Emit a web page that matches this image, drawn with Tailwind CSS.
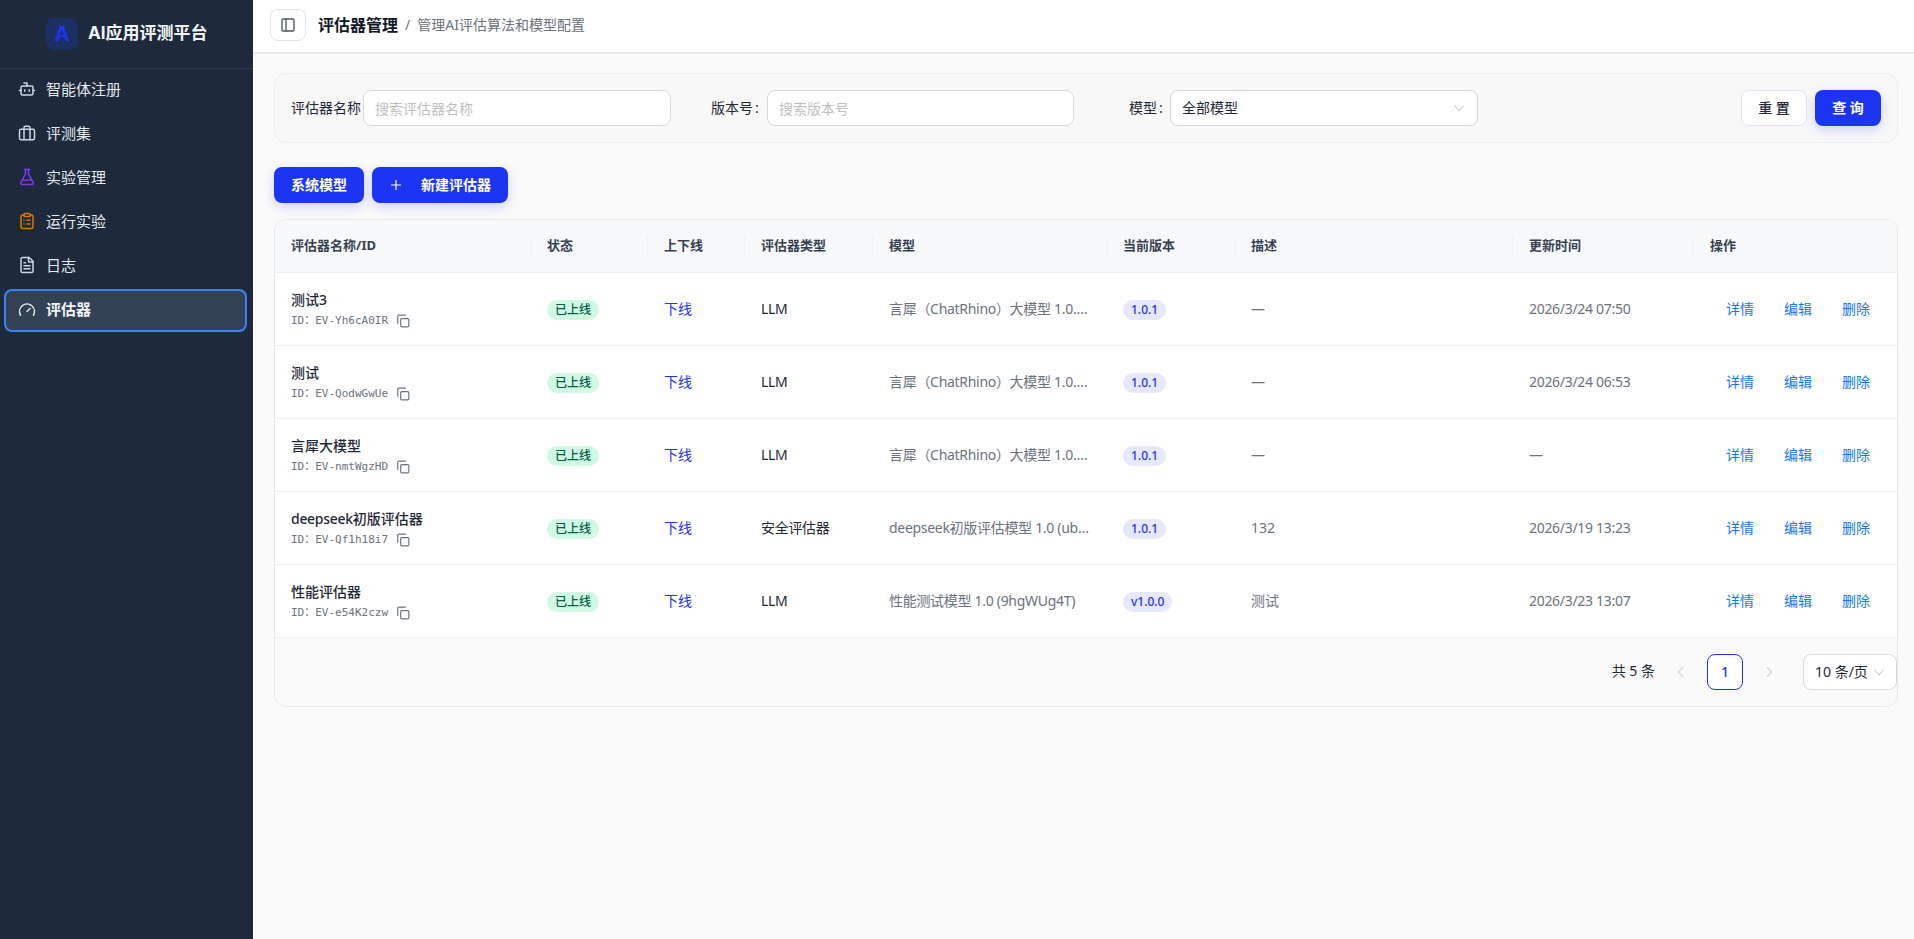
<!DOCTYPE html>
<html lang="zh-CN">

<head>
    <meta charset="UTF-8" />
    <title>评估器管理</title>
    <script src="https://cdn.jsdelivr.net/npm/@tailwindcss/browser@4"></script>
</head>

<body class="h-[939px] overflow-hidden bg-[#fafafa] text-[#1f2937] font-['Noto_Sans','Noto_Sans_CJK_SC',sans-serif]">
    <div class="flex h-full">
        <!-- 侧边栏 -->
        <aside class="w-[253px] shrink-0 bg-[#1e293b] text-[#e2e8f0]">
            <div class="h-[69px] flex items-center pl-[46px] gap-[10px] border-b border-[#2f3b4e]">
                <div class="w-8 h-8 rounded-lg bg-[#1c2f63] flex items-center justify-center text-[#1c35f2] text-xl font-bold font-['Inter',sans-serif]">A</div>
                <span class="text-[17px] font-bold text-[#f1f5f9] whitespace-nowrap font-['Inter','Noto_Sans_CJK_SC',sans-serif]">AI应用评测平台</span>
            </div>
            <nav class="flex flex-col gap-[2px] pl-1 pr-[6px] text-[15px]">
                <a class="h-[42px] flex items-center gap-[10px] pl-[12px] pb-[2px] border-2 border-transparent">
                    <svg class="w-[18px] h-[18px] text-[#cbd5e1]" viewBox="0 0 24 24" fill="none" stroke="currentColor" stroke-width="2" stroke-linecap="round" stroke-linejoin="round"><path d="M12 8V4H8" /><rect x="4" y="8" width="16" height="12" rx="2" /><path d="M2 14h2M20 14h2M15 13v2M9 13v2" /></svg>
                    智能体注册
                </a>
                <a class="h-[42px] flex items-center gap-[10px] pl-[12px] pb-[2px] border-2 border-transparent">
                    <svg class="w-[18px] h-[18px] text-[#cbd5e1]" viewBox="0 0 24 24" fill="none" stroke="currentColor" stroke-width="2" stroke-linecap="round" stroke-linejoin="round"><rect x="2" y="7" width="20" height="14" rx="2" /><path d="M16 7V5a2 2 0 0 0-2-2h-4a2 2 0 0 0-2 2v2M8 7v14M16 7v14" /></svg>
                    评测集
                </a>
                <a class="h-[42px] flex items-center gap-[10px] pl-[12px] pb-[2px] border-2 border-transparent">
                    <svg class="w-[18px] h-[18px] text-[#7c3aed]" viewBox="0 0 24 24" fill="none" stroke="currentColor" stroke-width="2" stroke-linecap="round" stroke-linejoin="round"><path d="M14 2v6l6.200 11.200A1.800 1.800 0 0 1 18.600 22H5.400a1.800 1.800 0 0 1-1.600-2.800L10 8V2" /><path d="M8.500 2h7M6.500 16h11" /></svg>
                    实验管理
                </a>
                <a class="h-[42px] flex items-center gap-[10px] pl-[12px] pb-[2px] border-2 border-transparent">
                    <svg class="w-[18px] h-[18px] text-[#d97706]" viewBox="0 0 24 24" fill="none" stroke="currentColor" stroke-width="2" stroke-linecap="round" stroke-linejoin="round"><rect x="8" y="2" width="8" height="4" rx="1" /><path d="M16 4h2a2 2 0 0 1 2 2v14a2 2 0 0 1-2 2H6a2 2 0 0 1-2-2V6a2 2 0 0 1 2-2h2" /><path d="M12 11h4M12 16h4M8 11h.01M8 16h.01" /></svg>
                    运行实验
                </a>
                <a class="h-[42px] flex items-center gap-[10px] pl-[12px] pb-[2px] border-2 border-transparent">
                    <svg class="w-[18px] h-[18px] text-[#cbd5e1]" viewBox="0 0 24 24" fill="none" stroke="currentColor" stroke-width="2" stroke-linecap="round" stroke-linejoin="round"><path d="M15 2H6a2 2 0 0 0-2 2v16a2 2 0 0 0 2 2h12a2 2 0 0 0 2-2V7z" /><path d="M14 2v5a1 1 0 0 0 1 1h5M10 9H8M16 13H8M16 17H8" /></svg>
                    日志
                </a>
                <a class="h-[43px] flex items-center gap-[10px] pl-[12px] pb-[2px] border-2 border-[#3b82f6] rounded-lg bg-[#334155] font-bold text-[#f1f5f9]">
                    <svg class="w-[18px] h-[18px] text-[#e2e8f0]" viewBox="0 0 24 24" fill="none" stroke="currentColor" stroke-width="2" stroke-linecap="round" stroke-linejoin="round"><path d="m12 14 4-4" /><path d="M3.340 19a10 10 0 1 1 17.320 0" /></svg>
                    评估器
                </a>
            </nav>
        </aside>

        <div class="flex-1 min-w-0 flex flex-col">
            <!-- 顶栏 -->
            <header class="h-[54px] shrink-0 bg-white border-b-2 border-[#e7e7ea] flex items-center pl-[17px] pb-[2px]">
                <button class="w-[36px] h-[32px] rounded-lg border border-[#dde2f5] bg-white flex items-center justify-center">
                    <svg class="w-4 h-4 text-[#4b5563]" viewBox="0 0 24 24" fill="none" stroke="currentColor" stroke-width="2" stroke-linecap="round" stroke-linejoin="round"><rect x="3" y="3" width="18" height="18" rx="2" /><path d="M9 3v18" /></svg>
                </button>
                <h1 class="ml-3 text-base font-bold text-[#111827]">评估器管理</h1>
                <span class="mx-[7px] text-sm text-[#6b7280]">/</span>
                <span class="text-sm text-[#6b7280]">管理AI评估算法和模型配置</span>
            </header>

            <main class="pl-[21px] pr-4 pt-[19px]">
                <!-- 筛选 -->
                <div class="h-[70px] rounded-xl border border-[#eceef1] bg-[#f8f8f9] flex items-center pl-4 pr-4 text-sm">
                    <label class="w-[72px] text-[#1f2937] whitespace-nowrap">评估器名称</label>
                    <input class="w-[308px] h-[36px] rounded-lg border border-[#d9d9d9] bg-white px-[11px] outline-none placeholder:text-[#bfbfbf]" placeholder="搜索评估器名称" />
                    <label class="ml-[40px] w-[56px] text-[#1f2937] whitespace-nowrap">版本号<span class="ml-[2px]">:</span></label>
                    <input class="w-[307px] h-[36px] rounded-lg border border-[#d9d9d9] bg-white px-[11px] outline-none placeholder:text-[#bfbfbf]" placeholder="搜索版本号" />
                    <label class="ml-[55px] w-[41px] text-[#1f2937] whitespace-nowrap">模型<span class="ml-[2px]">:</span></label>
                    <div class="w-[308px] h-[36px] rounded-lg border border-[#d9d9d9] bg-white pl-[11px] pr-[12px] flex items-center justify-between">
                        全部模型
                        <svg class="w-3 h-3 text-[#bfbfbf]" viewBox="0 0 12 12" fill="none" stroke="currentColor" stroke-width="1"><path d="M1.500 3.500 6 9l4.500-5.500" /></svg>
                    </div>
                    <button class="ml-auto w-[66px] h-[36px] rounded-lg border border-[#dde2f5] bg-white font-medium text-[#1f2937]">重 置</button>
                    <button class="ml-2 w-[66px] h-[36px] rounded-lg bg-[#1c35f2] text-white font-semibold shadow-[0_4px_12px_rgba(28,53,242,0.2)]">查 询</button>
                </div>

                <div class="mt-6 flex gap-2 text-sm font-semibold text-white">
                    <button class="w-[90px] h-[36px] rounded-lg bg-[#1c35f2] shadow-[0_4px_12px_rgba(28,53,242,0.2)]">系统模型</button>
                    <button class="w-[136px] h-[36px] rounded-lg bg-[#1c35f2] flex items-center pl-[17px] gap-[18px] shadow-[0_4px_12px_rgba(28,53,242,0.2)]">
                        <svg class="w-[14px] h-[14px]" viewBox="0 0 14 14" fill="none" stroke="currentColor" stroke-width="1.200"><path d="M7 2v10M2 7h10" /></svg>
                        新建评估器
                    </button>
                </div>

                <!-- 表格 -->
                <div class="mt-4 h-[488px] rounded-xl border border-[#e5e7eb] bg-[#fafafa] overflow-hidden">
                    <table class="w-full table-fixed border-collapse text-sm">
                        <colgroup>
                            <col class="w-[256px]" />
                            <col class="w-[117px]" />
                            <col class="w-[97px]" />
                            <col class="w-[128px]" />
                            <col class="w-[234px]" />
                            <col class="w-[128px]" />
                            <col class="w-[278px]" />
                            <col class="w-[181px]" />
                            <col />
                        </colgroup>
                        <thead>
                            <tr class="h-[52px] bg-[#f8f9fb] border-b border-[#eef0f3] text-[13px] font-bold text-[#374151]">
                                <th class="text-left font-bold px-4"><div class="relative">评估器名称/ID<i class="absolute right-[-16px] top-0 h-[22px] w-px bg-[#eef0f3]"></i></div></th>
                                <th class="text-left font-bold px-4"><div class="relative">状态<i class="absolute right-[-16px] top-0 h-[22px] w-px bg-[#eef0f3]"></i></div></th>
                                <th class="text-left font-bold px-4"><div class="relative">上下线<i class="absolute right-[-16px] top-0 h-[22px] w-px bg-[#eef0f3]"></i></div></th>
                                <th class="text-left font-bold px-4"><div class="relative">评估器类型<i class="absolute right-[-16px] top-0 h-[22px] w-px bg-[#eef0f3]"></i></div></th>
                                <th class="text-left font-bold px-4"><div class="relative">模型<i class="absolute right-[-16px] top-0 h-[22px] w-px bg-[#eef0f3]"></i></div></th>
                                <th class="text-left font-bold px-4"><div class="relative">当前版本<i class="absolute right-[-16px] top-0 h-[22px] w-px bg-[#eef0f3]"></i></div></th>
                                <th class="text-left font-bold px-4"><div class="relative">描述<i class="absolute right-[-16px] top-0 h-[22px] w-px bg-[#eef0f3]"></i></div></th>
                                <th class="text-left font-bold px-4"><div class="relative">更新时间<i class="absolute right-[-16px] top-0 h-[22px] w-px bg-[#eef0f3]"></i></div></th>
                                <th class="text-left font-bold px-4">操作</th>
                            </tr>
                        </thead>
                        <tbody id="rows" class="bg-white"></tbody>
                    </table>

                    <!-- 分页 -->
                    <div class="h-[68px] flex items-start justify-end pt-4 text-sm">
                        <span class="mt-[7px] mr-[20px] text-[#1f2937]">共 5 条</span>
                        <svg class="w-3 h-3 mt-[12px] mr-[20px] text-[#bfbfbf]" viewBox="0 0 12 12" fill="none" stroke="currentColor" stroke-width="1"><path d="M8 1.500 3 6l5 4.500" /></svg>
                        <button class="w-[36px] h-[36px] rounded-lg border border-[#1c35f2] bg-white text-[#1c35f2] font-medium">1</button>
                        <svg class="w-3 h-3 mt-[12px] mx-[20px] text-[#bfbfbf]" viewBox="0 0 12 12" fill="none" stroke="currentColor" stroke-width="1"><path d="M4 1.500 9 6l-5 4.500" /></svg>
                        <div class="ml-2 w-[94px] h-[36px] rounded-lg border border-[#d9d9d9] bg-white flex items-center justify-between pl-[11px] pr-[11px]">
                            10 条/页
                            <svg class="w-3 h-3 text-[#bfbfbf]" viewBox="0 0 12 12" fill="none" stroke="currentColor" stroke-width="1"><path d="M1.500 3.500 6 9l4.500-5.500" /></svg>
                        </div>
                    </div>
                </div>
            </main>
        </div>
    </div>

    <script>
        const data = [
            { name: "测试3", id: "EV-Yh6cA0IR", type: "LLM", model: "言犀（ChatRhino）大模型 1.0.1 (abc12345)", ver: "1.0.1", desc: "—", time: "2026/3/24 07:50" },
            { name: "测试", id: "EV-QodwGwUe", type: "LLM", model: "言犀（ChatRhino）大模型 1.0.1 (abc12345)", ver: "1.0.1", desc: "—", time: "2026/3/24 06:53" },
            { name: "言犀大模型", id: "EV-nmtWgzHD", type: "LLM", model: "言犀（ChatRhino）大模型 1.0.1 (abc12345)", ver: "1.0.1", desc: "—", time: "—" },
            { name: '<span class="tracking-[-0.3px]">deepseek</span>初版评估器', id: "EV-Qf1h18i7", type: "安全评估器", model: "deepseek初版评估模型 1.0 (ubX3kL9a)", ver: "1.0.1", desc: "132", time: "2026/3/19 13:23" },
            { name: "性能评估器", id: "EV-e54K2czw", type: "LLM", model: "性能测试模型 1.0 (9hgWUg4T)", ver: "v1.0.0", desc: "测试", time: "2026/3/23 13:07" },
        ];

        // 渲染表格行
        document.getElementById("rows").innerHTML = data.map(r => `
            <tr class="h-[73px] border-b border-[#eef0f3]">
                <td class="px-4 pt-[2px]">
                    <div class="font-medium text-[#1f2937] leading-5">${r.name}</div>
                    <div class="flex items-center mt-[3px] text-[11px] leading-4 text-[#6b7280] font-['DejaVu_Sans_Mono','Noto_Sans_CJK_SC',monospace]">
                        ID：${r.id}
                        <svg class="w-[14px] h-[14px] ml-[8px] text-[#6b7280]" viewBox="0 0 24 24" fill="none" stroke="currentColor" stroke-width="2" stroke-linecap="round" stroke-linejoin="round"><rect x="8" y="8" width="14" height="14" rx="2" /><path d="M3 16V4a2 2 0 0 1 2-2h11" /></svg>
                    </div>
                </td>
                <td class="px-4"><span class="inline-block align-middle mt-[2px] h-[20px] leading-5 px-2 rounded-full bg-[#d1fae5] text-[#065f46] text-xs font-medium">已上线</span></td>
                <td class="px-4 text-[#1c35f2]">下线</td>
                <td class="px-4 text-[#1f2937] tracking-[-0.3px]">${r.type}</td>
                <td class="px-4 text-[#6b7280] truncate tracking-[-0.3px]">${r.model}</td>
                <td class="px-4"><span class="inline-block align-middle mt-[2px] h-[20px] leading-5 px-2 rounded-full bg-[#e6e8fd] text-[#1c35f2] text-xs font-medium">${r.ver}</span></td>
                <td class="px-4 text-[#6b7280]">${r.desc}</td>
                <td class="px-4 text-[#6b7280] tracking-[-0.3px]">${r.time}</td>
                <td class="pl-8 pr-4 text-[#1677ff]"><div class="flex gap-[30px]"><a>详情</a><a>编辑</a><a>删除</a></div></td>
            </tr>`).join("");
    </script>
</body>

</html>
